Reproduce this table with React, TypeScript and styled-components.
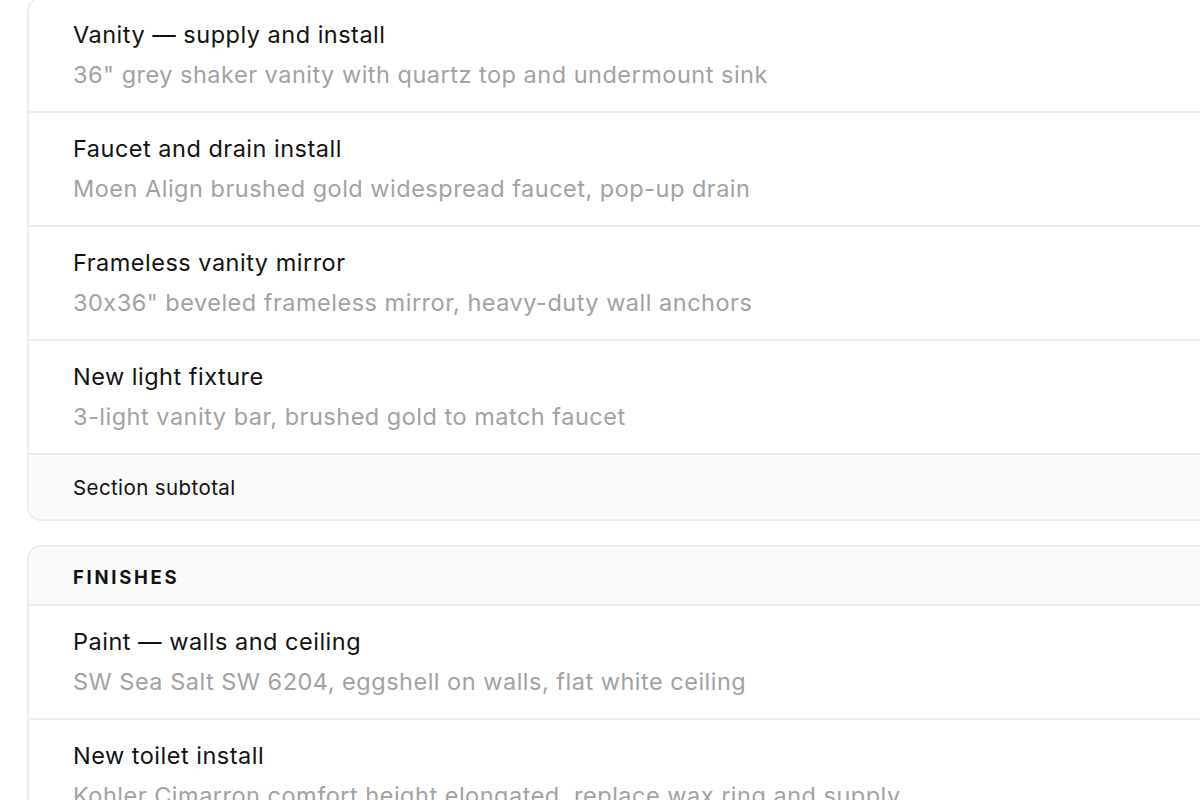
import React from "react";
import styled, { createGlobalStyle } from "styled-components";

const Global = createGlobalStyle`
  html, body { margin: 0; padding: 0; background: #ffffff; }
  body {
    font-family: Inter, "Noto Sans", "Liberation Sans", sans-serif;
    font-feature-settings: "calt" 0;
    overflow: hidden;
  }
`;

const Page = styled.div`
  width: 1200px;
  height: 800px;
  overflow: hidden;
  display: flex;
  flex-direction: column;
  gap: 24px;
`;

const Card = styled.section<{ $first?: boolean }>`
  margin-left: 27px;
  margin-right: -60px;
  margin-top: ${(p) => (p.$first ? "-3px" : "0")};
  border: 2px solid #ececec;
  border-radius: 14px;
  overflow: hidden;
  background: #ffffff;
  flex-shrink: 0;
`;

const Header = styled.div`
  height: 59px;
  display: flex;
  align-items: center;
  padding: 2px 0 0 44px;
  box-sizing: border-box;
  background: #fafafa;
  border-bottom: 2px solid #ececec;
  font-size: 18.5px;
  font-weight: 700;
  letter-spacing: 2.7px;
  color: #121212;
  text-transform: uppercase;
`;

const Row = styled.div`
  padding: 20px 0 20px 44px;
  border-bottom: 2px solid #ececec;
  display: flex;
  flex-direction: column;
  gap: 8px;
`;

const Title = styled.div`
  font-size: 23.5px;
  letter-spacing: 0.5px;
  line-height: 32px;
  color: #121212;
  white-space: nowrap;
`;

const Sub = styled.div`
  font-size: 23.5px;
  letter-spacing: 0.5px;
  line-height: 32px;
  color: #a2a2a2;
  white-space: nowrap;
`;

const Subtotal = styled.div`
  height: 64px;
  display: flex;
  align-items: center;
  padding-left: 44px;
  background: #fafafa;
  font-size: 20.5px;
  letter-spacing: 0.4px;
  color: #121212;
`;

type Item = { title: string; sub: string };

const plumbing: Item[] = [
  { title: "Vanity — supply and install", sub: "36\" grey shaker vanity with quartz top and undermount sink" },
  { title: "Faucet and drain install", sub: "Moen Align brushed gold widespread faucet, pop-up drain" },
  { title: "Frameless vanity mirror", sub: "30x36\" beveled frameless mirror, heavy-duty wall anchors" },
  { title: "New light fixture", sub: "3-light vanity bar, brushed gold to match faucet" },
];

const finishes: Item[] = [
  { title: "Paint — walls and ceiling", sub: "SW Sea Salt SW 6204, eggshell on walls, flat white ceiling" },
  { title: "New toilet install", sub: "Kohler Cimarron comfort height elongated, replace wax ring and supply" },
];

const ItemRow = ({ item }: { item: Item }) => (
  <Row>
    <Title>{item.title}</Title>
    <Sub>{item.sub}</Sub>
  </Row>
);

export default function App() {
  return (
    <>
      <Global />
      <Page>
        <Card $first>
          {plumbing.map((it) => (
            <ItemRow key={it.title} item={it} />
          ))}
          <Subtotal>Section subtotal</Subtotal>
        </Card>
        <Card>
          <Header>Finishes</Header>
          {finishes.map((it) => (
            <ItemRow key={it.title} item={it} />
          ))}
        </Card>
      </Page>
    </>
  );
}
